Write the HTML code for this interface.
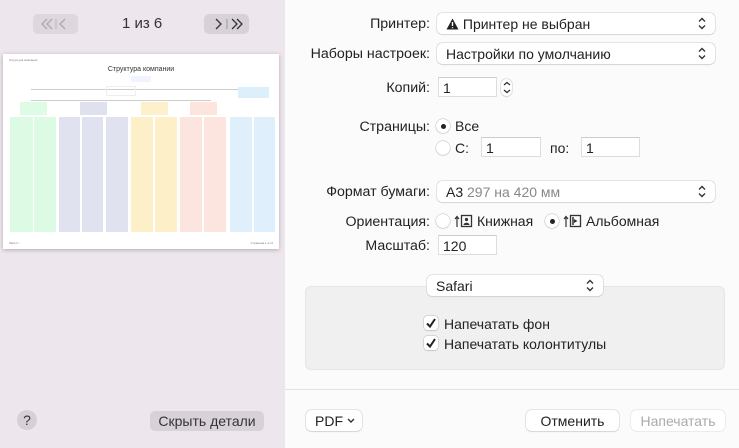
<!DOCTYPE html>
<html><head><meta charset="utf-8"><style>
*{box-sizing:border-box;margin:0;padding:0}
body{width:739px;height:448px;overflow:hidden;font-family:"Liberation Sans",sans-serif;font-size:13px;color:#222;background:#fbfbfb;position:relative}
.abs{position:absolute}
#left{left:0;top:0;width:285px;height:448px;background:#ede6ec}
.btn{position:absolute;background:#d8d2d8;border-radius:5px}
.lbl{position:absolute;text-align:right;width:140px;left:290px;font-size:14.2px}
.pop{position:absolute;background:#fff;border-radius:5px;box-shadow:0 0 0 .5px #ccc,0 1px 1px rgba(0,0,0,.12);height:21px;padding:3px 9px;font-size:14px;white-space:nowrap}
.pop svg.ar{position:absolute;right:9px;top:4px}
.fld{position:absolute;background:#fff;border:1px solid #ddd;border-top-color:#ccc;height:20px;padding:2px 4px;font-size:14px}
.rad{position:absolute;width:14px;height:14px;border-radius:50%;background:#fff;box-shadow:0 0 0 .5px #bbb,0 1px 1px rgba(0,0,0,.1)}
.rad.on::after{content:"";position:absolute;left:4.5px;top:4.5px;width:5px;height:5px;border-radius:50%;background:#222}
.t{position:absolute;font-size:14px;white-space:nowrap}
.chk{position:absolute;width:14px;height:14px;border-radius:3px;background:#fff;box-shadow:0 0 0 .5px #bbb,0 1px 1px rgba(0,0,0,.1)}
.col{position:absolute;top:117px;height:115px}
.ln{position:absolute;height:1px;background:#bbb}
</style></head><body>
<div id="left" class="abs">
 <div class="btn" style="left:33px;top:14px;width:45px;height:20px;opacity:.75"></div>
 <svg class="abs" style="left:33px;top:14px" width="45" height="20"><path d="M14 5 9 10 14 15M19 5 14 10 19 15M32 5 27 10 32 15" stroke="#aaa" stroke-width="1.3" fill="none"/><path d="M23 5V15" stroke="#bbb"/></svg>
 <div class="abs" style="left:122px;top:15px;font-size:15px;color:#333">1 из 6</div>
 <div class="btn" style="left:204px;top:14px;width:45px;height:20px"></div>
 <svg class="abs" style="left:204px;top:14px" width="45" height="20"><path d="M12 5 17 10 12 15M28 5 33 10 28 15M33 5 38 10 33 15" stroke="#333" stroke-width="1.3" fill="none"/><path d="M23 5V15" stroke="#999"/></svg>
 <div class="abs" style="left:3px;top:54px;width:276px;height:195px;background:#fff;box-shadow:0 1px 4px rgba(0,0,0,.25)">
  <div class="abs" style="left:6px;top:4px;font-size:3px;color:#777">Структура компании</div>
  <div class="abs" style="left:0;width:276px;top:12px;text-align:center;font-size:7px;color:#333">Структура компании</div>
  <div class="abs" style="left:128px;top:22px;width:20px;height:6px;background:#f0f4ff"></div>
  <div class="abs" style="left:28px;top:35px;width:237px;height:1px;background:#ccc"></div>
  <div class="abs" style="left:103px;top:32px;width:30px;height:10px;border:1px solid #eee"></div>
  <div class="abs" style="left:235px;top:33px;width:31px;height:11px;background:#dceffb"></div>
  <div class="abs" style="left:28px;top:46px;width:180px;height:1px;background:#ccc"></div>
  <div class="abs" style="left:17px;top:48px;width:27px;height:13px;background:#ddfbe5"></div>
  <div class="abs" style="left:77px;top:48px;width:27px;height:13px;background:#e0e1ef"></div>
  <div class="abs" style="left:138px;top:48px;width:27px;height:13px;background:#fdf1cc"></div>
  <div class="abs" style="left:187px;top:48px;width:27px;height:13px;background:#fde4dd"></div>
  <div class="abs" style="left:6px;top:187px;font-size:3px;color:#777">https://...</div>
  <div class="abs" style="right:6px;top:187px;font-size:3px;color:#777">Страница 1 из 6</div>
 </div>
 <div class="col" style="left:10px;width:23px;background:#dcfae4"></div>
 <div class="col" style="left:34px;width:22px;background:#dcfae4"></div>
 <div class="col" style="left:59px;width:21px;background:#e1e2f0"></div>
 <div class="col" style="left:82px;width:21px;background:#e1e2f0"></div>
 <div class="col" style="left:106px;width:22px;background:#e1e2f0"></div>
 <div class="col" style="left:131px;width:22px;background:#fdf0c8"></div>
 <div class="col" style="left:155px;width:22px;background:#fdf0c8"></div>
 <div class="col" style="left:180px;width:22px;background:#fde5df"></div>
 <div class="col" style="left:204px;width:22px;background:#fde5df"></div>
 <div class="col" style="left:230px;width:22px;background:#dff0fc"></div>
 <div class="col" style="left:254px;width:21px;background:#dff0fc"></div>
 <div class="abs" style="left:17px;top:410px;width:20px;height:20px;border-radius:50%;background:#d6d0d6;text-align:center;line-height:20px;font-size:14px;color:#333">?</div>
 <div class="btn" style="left:150px;top:411px;width:114px;height:20px"></div>
 <div class="abs" style="left:150px;top:413px;width:114px;text-align:center;font-size:14px;color:#333">Скрыть детали</div>
</div>

<div class="lbl" style="top:16px">Принтер:</div>
<div class="pop" style="left:437px;top:13px;width:278px"><svg width="13" height="12" style="vertical-align:-1px"><path d="M6.5 0.5 12.5 11.5H0.5Z" fill="#222"/><path d="M6.5 4V8M6.5 9.3V10.3" stroke="#fff" stroke-width="1.4"/></svg> Принтер не выбран<svg class="ar" width="8" height="13"><path d="M1 4.5 4 1.5 7 4.5M1 8.5 4 11.5 7 8.5" stroke="#333" fill="none" stroke-width="1.4"/></svg></div>
<div class="lbl" style="top:46px">Наборы настроек:</div>
<div class="pop" style="left:437px;top:43px;width:278px">Настройки по умолчанию<svg class="ar" width="8" height="13"><path d="M1 4.5 4 1.5 7 4.5M1 8.5 4 11.5 7 8.5" stroke="#333" fill="none" stroke-width="1.4"/></svg></div>
<div class="lbl" style="top:80px">Копий:</div>
<div class="fld" style="left:438px;top:77px;width:59px">1</div>
<div class="pop" style="left:501px;top:79px;width:11px;height:17px;padding:0"><svg style="position:absolute;left:1.5px;top:2px" width="8" height="13"><path d="M1 4 4 1.5 7 4M1 9 4 11.5 7 9" stroke="#333" fill="none" stroke-width="1.3"/></svg></div>
<div class="lbl" style="top:119px">Страницы:</div>
<div class="rad on" style="left:436px;top:119px"></div><div class="t" style="left:455px;top:118px">Все</div>
<div class="rad" style="left:436px;top:141px"></div><div class="t" style="left:455px;top:140px">С:</div>
<div class="fld" style="left:481px;top:137px;width:60px">1</div>
<div class="t" style="left:550px;top:140px">по:</div>
<div class="fld" style="left:581px;top:137px;width:59px">1</div>
<div class="lbl" style="top:184px">Формат бумаги:</div>
<div class="pop" style="left:437px;top:181px;width:278px">А3 <span style="color:#888">297 на 420 мм</span><svg class="ar" width="8" height="13"><path d="M1 4.5 4 1.5 7 4.5M1 8.5 4 11.5 7 8.5" stroke="#333" fill="none" stroke-width="1.4"/></svg></div>
<div class="lbl" style="top:214px">Ориентация:</div>
<div class="rad" style="left:436px;top:214px"></div>
<svg class="abs" style="left:454px;top:214px" width="20" height="14"><path d="M3 13V3M1 5 3 2.5 5 5" stroke="#333" fill="none" stroke-width="1.2"/><rect x="7.5" y="1.5" width="10" height="11" stroke="#333" fill="none" stroke-width="1.3"/><circle cx="12.5" cy="5.5" r="1.6" fill="#333"/><path d="M9.5 11C9.5 8 15.5 8 15.5 11Z" fill="#333"/></svg>
<div class="t" style="left:477px;top:213px">Книжная</div>
<div class="rad on" style="left:545px;top:214px"></div>
<svg class="abs" style="left:563px;top:214px" width="20" height="14"><path d="M3 13V3M1 5 3 2.5 5 5" stroke="#333" fill="none" stroke-width="1.2"/><rect x="7.5" y="1.5" width="10" height="11" stroke="#333" fill="none" stroke-width="1.3"/><path d="M10 3V11" stroke="#333" stroke-width="1.5"/><path d="M11 5 14.5 7 11 9Z" fill="#333"/></svg>
<div class="t" style="left:586px;top:213px">Альбомная</div>
<div class="lbl" style="top:238px">Масштаб:</div>
<div class="fld" style="left:438px;top:235px;width:59px">120</div>

<div class="abs" style="left:305px;top:286px;width:420px;height:84px;background:#f0f0f0;border-radius:6px;border:1px solid #e6e6e6"></div>
<div class="pop" style="left:427px;top:275px;width:176px">Safari<svg class="ar" width="8" height="13"><path d="M1 4.5 4 1.5 7 4.5M1 8.5 4 11.5 7 8.5" stroke="#333" fill="none" stroke-width="1.4"/></svg></div>
<div class="chk" style="left:424px;top:316px"></div><svg class="abs" style="left:424px;top:316px" width="14" height="14"><path d="M3 7.5 6 10.5 11 3" stroke="#222" stroke-width="2" fill="none"/></svg>
<div class="t" style="left:444px;top:316px">Напечатать фон</div>
<div class="chk" style="left:424px;top:336px"></div><svg class="abs" style="left:424px;top:336px" width="14" height="14"><path d="M3 7.5 6 10.5 11 3" stroke="#222" stroke-width="2" fill="none"/></svg>
<div class="t" style="left:444px;top:336px">Напечатать колонтитулы</div>

<div class="abs" style="left:285px;top:389px;width:454px;height:1px;background:#e2e2e2"></div>
<div class="pop" style="left:306px;top:410px;width:56px;height:21px">PDF<svg style="position:absolute;left:41px;top:8px" width="8" height="6"><path d="M1 1 4 4 7 1" stroke="#333" fill="none" stroke-width="1.4"/></svg></div>
<div class="pop" style="left:526px;top:410px;width:93px;text-align:center">Отменить</div>
<div class="pop" style="left:631px;top:410px;width:94px;text-align:center;color:#aaa;box-shadow:0 0 0 .5px #ddd">Напечатать</div>
</body></html>
